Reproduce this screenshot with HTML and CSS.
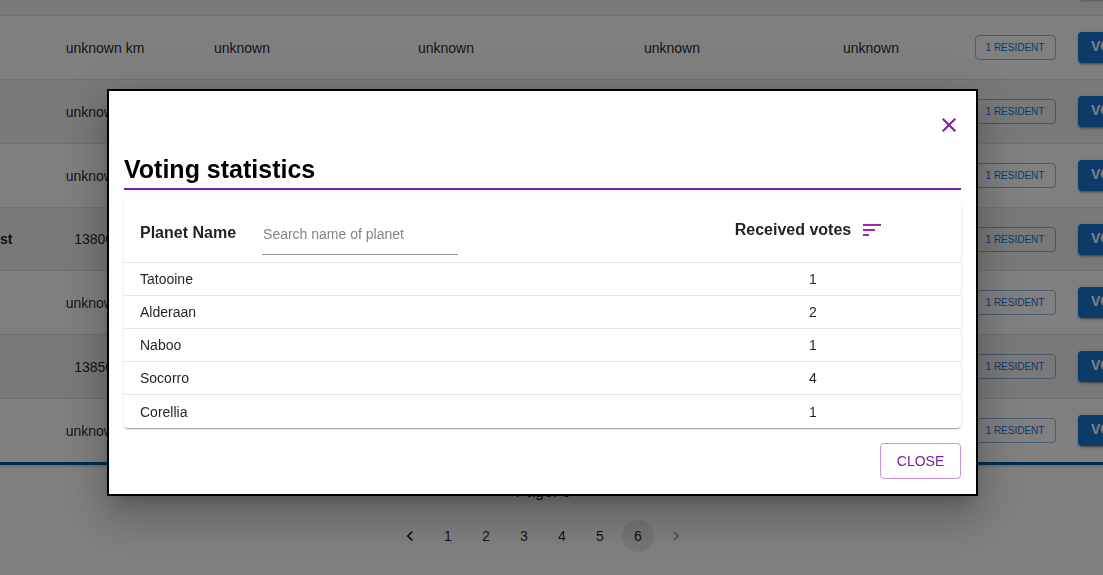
FILE: index.html
```html
<!DOCTYPE html>
<html lang="en">
<head>
<meta charset="utf-8">
<title>Voting statistics</title>
<link rel="stylesheet" href="styles.css">
</head>
<body>
<main class="page">
  <div class="planets-wrap">
    <table class="planets">
      <colgroup><col class="c-name"><col class="c-diameter"><col class="c-climate"><col class="c-terrain"><col class="c-water"><col class="c-population"><col class="c-residents"><col class="c-vote"></colgroup>
      <tbody>
        <tr><td></td><td></td><td></td><td></td><td></td><td></td><td></td><td><button class="vote">VOTE</button></td></tr>
        <tr><td></td><td>unknown km</td><td>unknown</td><td>unknown</td><td>unknown</td><td>unknown</td><td><button class="resident">1 RESIDENT</button></td><td><button class="vote">VOTE</button></td></tr>
        <tr><td></td><td>unknown km</td><td></td><td></td><td></td><td></td><td><button class="resident">1 RESIDENT</button></td><td><button class="vote">VOTE</button></td></tr>
        <tr><td></td><td>unknown km</td><td></td><td></td><td></td><td></td><td><button class="resident">1 RESIDENT</button></td><td><button class="vote">VOTE</button></td></tr>
        <tr><td>st</td><td>13800 km</td><td></td><td></td><td></td><td></td><td><button class="resident">1 RESIDENT</button></td><td><button class="vote">VOTE</button></td></tr>
        <tr><td></td><td>unknown km</td><td></td><td></td><td></td><td></td><td><button class="resident">1 RESIDENT</button></td><td><button class="vote">VOTE</button></td></tr>
        <tr><td></td><td>13850 km</td><td></td><td></td><td></td><td></td><td><button class="resident">1 RESIDENT</button></td><td><button class="vote">VOTE</button></td></tr>
        <tr><td></td><td>unknown km</td><td></td><td></td><td></td><td></td><td><button class="resident">1 RESIDENT</button></td><td><button class="vote">VOTE</button></td></tr>
      </tbody>
    </table>
  </div>
  <footer class="pager">
    <p class="pager-label">Page: 6</p>
    <nav class="pager-list" aria-label="Pagination">
      <button aria-label="Previous page"><svg viewBox="0 0 24 24"><path d="M15.41 7.41L14 6l-6 6 6 6 1.41-1.41L10.83 12z"/></svg></button>
      <button>1</button><button>2</button><button>3</button><button>4</button><button>5</button>
      <button class="current" aria-current="page">6</button>
      <button aria-label="Next page" disabled><svg viewBox="0 0 24 24"><path d="M10 6L8.59 7.41 13.17 12l-4.58 4.59L10 18l6-6z"/></svg></button>
    </nav>
  </footer>
</main>

<div class="backdrop">
  <section class="modal" role="dialog" aria-modal="true" aria-labelledby="modal-title">
    <button class="icon-close" aria-label="Close dialog"><svg viewBox="0 0 24 24"><path d="M19 6.41L17.59 5 12 10.59 6.41 5 5 6.41 10.59 12 5 17.59 6.41 19 12 13.41 17.59 19 19 17.59 13.41 12z"/></svg></button>
    <h1 class="title" id="modal-title">Voting statistics</h1>
    <div class="card">
      <table class="stats">
        <colgroup><col><col class="c-votes"></colgroup>
        <thead>
          <tr>
            <th scope="col"><div class="name-head"><label for="search">Planet Name</label><input id="search" type="text" placeholder="Search name of planet"></div></th>
            <th scope="col"><div class="votes-head">Received votes<button class="sort" aria-label="Sort by votes"><svg viewBox="0 0 24 24"><path d="M3 18h6v-2H3v2zM3 6v2h18V6H3zm0 7h12v-2H3v2z"/></svg></button></div></th>
          </tr>
        </thead>
        <tbody>
          <tr><td>Tatooine</td><td>1</td></tr>
          <tr><td>Alderaan</td><td>2</td></tr>
          <tr><td>Naboo</td><td>1</td></tr>
          <tr><td>Socorro</td><td>4</td></tr>
          <tr><td>Corellia</td><td>1</td></tr>
        </tbody>
      </table>
    </div>
    <button class="close">CLOSE</button>
  </section>
</div>
</body>
</html>
```

FILE: styles.css
```css
* { box-sizing: border-box; }

body {
  margin: 0;
  height: 100vh;
  overflow: hidden;
  background: #fff;
  color: rgba(0, 0, 0, 0.87);
  font-family: "Liberation Sans", Arial, sans-serif;
  font-size: 14px;
}

button {
  padding: 0;
  border: 0;
  background: none;
  color: inherit;
  font: inherit;
  cursor: pointer;
}

svg { display: block; fill: currentColor; }

/* Planet list, scrolled to its last rows */
.planets-wrap {
  overflow: hidden;
  border-bottom: 3px solid #01579b;
  box-shadow: 0 1px 3px rgba(0, 0, 0, 0.2);
}
.planets {
  width: 1189px;
  margin-top: -48px;
  border-collapse: separate;
  border-spacing: 0;
  table-layout: fixed;
}
.c-name { width: 45px; }
.c-diameter { width: 120px; }
.c-climate { width: 154px; }
.c-terrain { width: 254px; }
.c-water { width: 198px; }
.c-population { width: 200px; }
.c-residents { width: 88px; }
.c-vote { width: 130px; }
.planets tr { height: 64px; }
.planets tr:nth-child(3n+5) { height: 63px; }
.planets tr:nth-child(odd) { background: #f2f2f2; }
.planets td {
  padding: 0;
  border-bottom: 1px solid #e0e0e0;
  text-align: center;
  vertical-align: middle;
}
.planets tr:last-child td { border-bottom: 0; }
.planets td:first-child {
  padding-right: 33px;
  text-align: right;
  font-weight: 700;
}
.planets td:last-child { padding-left: 19px; text-align: left; }
.resident {
  display: block;
  width: 81px;
  height: 25px;
  margin: 0 auto;
  border: 1px solid rgba(25, 118, 210, 0.5);
  border-radius: 4px;
  color: #1976d2;
  font-size: 10px;
}
.vote {
  display: block;
  height: 31px;
  padding: 0 13px 3px;
  border-radius: 4px;
  background: #1976d2;
  box-shadow: 0 3px 1px -2px rgba(0, 0, 0, 0.2), 0 2px 2px rgba(0, 0, 0, 0.14), 0 1px 5px rgba(0, 0, 0, 0.12);
  color: #fff;
  font-size: 14px;
  font-weight: 700;
}

.pager {
  display: flex;
  flex-direction: column;
  align-items: center;
  gap: 16px;
  padding: 15px 17px 0 0;
}
.pager-label { margin: 0; font-size: 16px; line-height: 24px; }
.pager-list { display: flex; gap: 6px; }
.pager-list button {
  display: flex;
  align-items: center;
  justify-content: center;
  width: 32px;
  height: 32px;
  padding-bottom: 1px;
  border-radius: 16px;
}
.pager-list .current { background: rgba(0, 0, 0, 0.08); }
.pager-list button:disabled { color: inherit; opacity: 0.4; }
.pager-list svg { width: 20px; height: 20px; }

/* Dialog */
.backdrop {
  position: fixed;
  inset: 0;
  padding: 89px 125px 0 107px;
  background: rgba(0, 0, 0, 0.5);
}
.modal {
  display: flex;
  flex-direction: column;
  padding: 22px 15px 15px;
  border: 2px solid #000;
  background: #fff;
  box-shadow: 0 11px 15px -7px rgba(0, 0, 0, 0.2), 0 24px 38px 3px rgba(0, 0, 0, 0.14), 0 9px 46px 8px rgba(0, 0, 0, 0.12);
}
.icon-close {
  align-self: flex-end;
  width: 24px;
  height: 24px;
  color: #7b1fa2;
}
.title {
  margin: 17px 0 8px;
  padding-bottom: 4px;
  border-bottom: 2px solid #7b1fa2;
  color: #000;
  font-size: 25px;
  line-height: 30px;
}
.card {
  border-radius: 4px;
  box-shadow: 0 2px 1px -1px rgba(0, 0, 0, 0.2), 0 1px 1px rgba(0, 0, 0, 0.14), 0 1px 3px rgba(0, 0, 0, 0.12);
}
.stats {
  width: 100%;
  border-collapse: separate;
  border-spacing: 0;
  table-layout: fixed;
}
.c-votes { width: 296px; }
.stats th,
.stats td {
  padding: 0 16px;
  border-bottom: 1px solid #e6e6e6;
  text-align: left;
}
.stats th { height: 65px; font-size: 16px; }
.stats td { height: 33px; }
.stats tbody tr:last-child td { border-bottom: 0; }
.stats td:last-child { text-align: center; }
.name-head {
  display: flex;
  align-items: center;
  gap: 26px;
  padding-top: 8px;
}
.name-head label { padding-bottom: 2px; }
.name-head input {
  width: 196px;
  height: 42px;
  padding: 0 0 0 1px;
  border: 0;
  border-bottom: 1px solid #949494;
  outline: 0;
  background: none;
  font: 400 14px "Liberation Sans", Arial, sans-serif;
}
.name-head input::placeholder { color: #858585; opacity: 1; }
.votes-head {
  display: flex;
  align-items: center;
  justify-content: center;
  gap: 9px;
}
.sort {
  width: 24px;
  height: 24px;
  margin-right: 7px;
  color: #9c27b0;
}
.close {
  align-self: flex-end;
  width: 81px;
  height: 36px;
  margin-top: 15px;
  border: 1px solid rgba(156, 39, 176, 0.5);
  border-radius: 4px;
  color: #7b1fa2;
}
```
